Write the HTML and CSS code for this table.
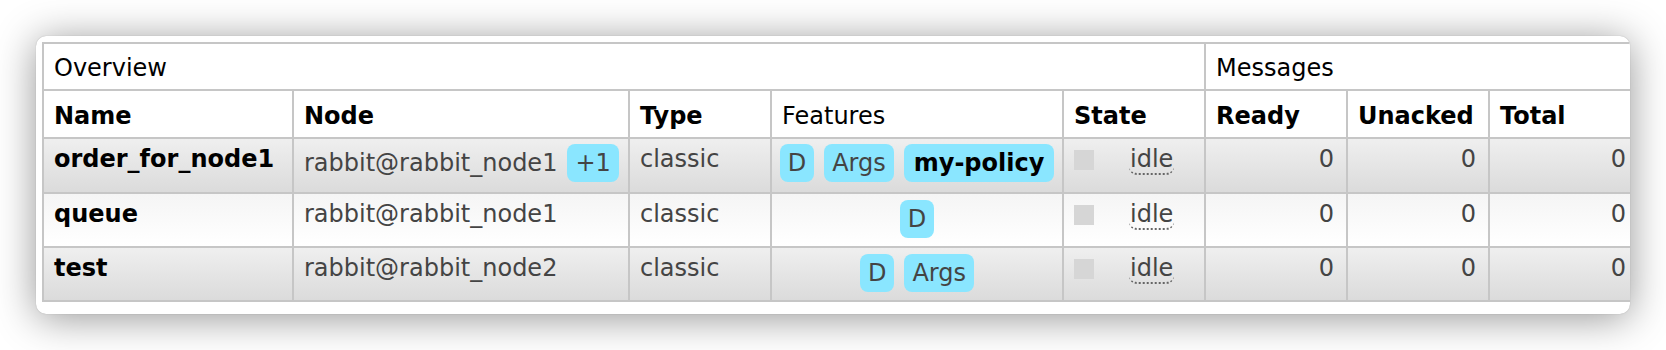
FILE: index.html
```html
<!DOCTYPE html>
<html>
<head>
<meta charset="utf-8">
<link rel="stylesheet" href="styles.css">
</head>
<body>
<div class="window">
  <table class="list">
    <colgroup>
      <col class="w-name"><col class="w-node"><col class="w-type"><col class="w-feat"><col class="w-state"><col class="w-num"><col class="w-num"><col class="w-total">
    </colgroup>
    <thead>
      <tr class="group">
        <th colspan="5">Overview</th>
        <th colspan="3">Messages</th>
      </tr>
      <tr class="heads">
        <th>Name</th><th>Node</th><th>Type</th><th class="light">Features</th><th>State</th><th>Ready</th><th>Unacked</th><th>Total</th>
      </tr>
    </thead>
    <tbody>
      <tr class="alt1 first">
        <td class="name">order_for_node1</td>
        <td><div class="node">rabbit@rabbit_node1<span class="badge">+1</span></div></td>
        <td>classic</td>
        <td><div class="features"><span class="badge">D</span><span class="badge">Args</span><span class="badge policy">my-policy</span></div></td>
        <td><div class="state"><span class="key"></span><span class="idle">idle</span></div></td>
        <td class="num">0</td><td class="num">0</td><td class="num">0</td>
      </tr>
      <tr class="alt2">
        <td class="name">queue</td>
        <td><div class="node">rabbit@rabbit_node1</div></td>
        <td>classic</td>
        <td><div class="features"><span class="badge">D</span></div></td>
        <td><div class="state"><span class="key"></span><span class="idle">idle</span></div></td>
        <td class="num">0</td><td class="num">0</td><td class="num">0</td>
      </tr>
      <tr class="alt1">
        <td class="name">test</td>
        <td><div class="node">rabbit@rabbit_node2</div></td>
        <td>classic</td>
        <td><div class="features"><span class="badge">D</span><span class="badge">Args</span></div></td>
        <td><div class="state"><span class="key"></span><span class="idle">idle</span></div></td>
        <td class="num">0</td><td class="num">0</td><td class="num">0</td>
      </tr>
    </tbody>
  </table>
</div>
</body>
</html>
```
FILE: styles.css
```css
html, body {
  margin: 0;
  padding: 0;
  background: #ffffff;
}
body {
  font-family: "DejaVu Sans", Verdana, sans-serif;
  font-size: 24px;
  color: #444;
  height: 350px;
  overflow: hidden;
}
.window {
  margin: 36px 0 0 36px;
  width: 1594px;
  height: 278px;
  box-sizing: border-box;
  padding: 6px 0 0 6px;
  background: #fff;
  border-radius: 10px;
  overflow: hidden;
  box-shadow: 0 4px 40px rgba(0, 0, 0, 0.42), 0 0 1px rgba(0, 0, 0, 0.3);
}
.list {
  border-collapse: collapse;
  table-layout: fixed;
  width: 1596px;
  border: 2px solid #c6c6c6;
}
.w-name { width: 250px; }
.w-node { width: 336px; }
.w-type { width: 142px; }
.w-feat { width: 292px; }
.w-state { width: 142px; }
.w-num { width: 142px; }
.w-total { width: 150px; }
.list th, .list td {
  border: 2px solid #c6c6c6;
  padding: 0 10px;
  text-align: left;
  vertical-align: top;
  white-space: nowrap;
  box-sizing: border-box;
}
.list th {
  background: #fff;
  color: #000;
}
.group th {
  height: 47px;
  padding-top: 10px;
  font-weight: normal;
}
.heads th {
  height: 48px;
  padding-top: 11px;
  font-weight: bold;
}
.heads th.light {
  font-weight: normal;
}
.list td {
  padding-top: 6px;
}
.alt1 td {
  height: 54px;
  background: linear-gradient(to bottom, #efefef 0%, #dbdbdb 100%);
}
.alt1.first td {
  height: 55px;
}
.alt2 td {
  height: 54px;
  background: linear-gradient(to bottom, #f5f5f5 0%, #ffffff 100%);
}
.list td.name {
  font-weight: bold;
  color: #000;
}
.list td.num {
  text-align: right;
  padding-right: 12px;
}
.node {
  display: flex;
  align-items: baseline;
  gap: 10px;
}
.features {
  display: flex;
  justify-content: center;
  align-items: baseline;
  gap: 10px;
}
.badge {
  display: inline-block;
  background: #8ae6ff;
  border-radius: 8px;
  padding: 5px 8px;
  color: #444;
}
.badge.policy {
  font-weight: bold;
  color: #000;
  padding: 5px 10px;
}
.first .badge {
  margin-top: -1px;
}
.state {
  display: flex;
  align-items: flex-start;
}
.key {
  width: 20px;
  height: 20px;
  margin-top: 5px;
  background: #d6d6d6;
  flex: none;
}
.idle {
  margin-left: 35px;
  border-bottom: 2px dotted #666;
  border-radius: 0 0 8px 8px;
  padding: 0 1px;
}
```
